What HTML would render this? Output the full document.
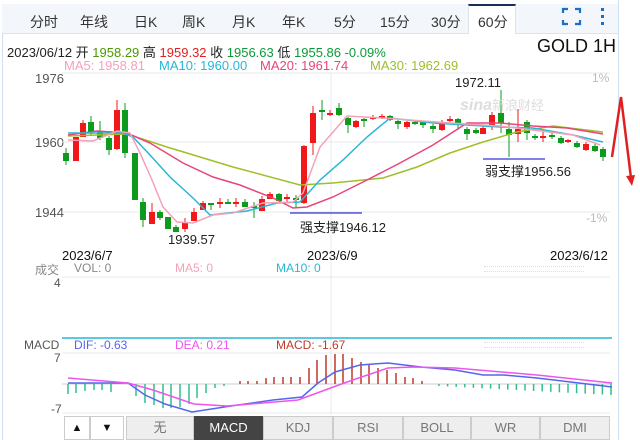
<!DOCTYPE html>
<html><head><meta charset="utf-8"><style>
*{margin:0;padding:0;box-sizing:border-box}
body{width:640px;height:440px;background:#fff;position:relative;overflow:hidden;font-family:"Liberation Sans","Noto Sans CJK SC",sans-serif}
.a{position:absolute;white-space:nowrap}
.tabs{position:absolute;left:2px;top:4px;width:616px;height:30px;background:#f3f6fa;border-bottom:1px solid #dde3ea}
.tab{position:absolute;top:8px;font-size:14px;color:#333}
.act{position:absolute;left:466px;top:0;width:48px;height:30px;background:#fff;border-top:2px solid #1c2d5a;border-left:1px solid #dde3ea;border-right:1px solid #dde3ea}
.btn{position:absolute;top:416px;height:24px;border:1px solid #ccc;background:#eee;font-size:13px;color:#777;text-align:center;line-height:22px}
</style></head><body>
<div class="a" style="left:2px;top:4px;width:1px;height:436px;background:#cfe0f0"></div>
<div class="a" style="left:618px;top:0;width:1px;height:440px;background:#cfe0f0"></div>
<div class="tabs">
<div class="act"></div>
<span class="tab" style="left:28px">分时</span>
<span class="tab" style="left:78px">年线</span>
<span class="tab" style="left:132px">日K</span>
<span class="tab" style="left:180px">周K</span>
<span class="tab" style="left:230px">月K</span>
<span class="tab" style="left:280px">年K</span>
<span class="tab" style="left:332px">5分</span>
<span class="tab" style="left:378px">15分</span>
<span class="tab" style="left:429px">30分</span>
<span class="tab" style="left:476px">60分</span>
<svg class="a" style="left:558px;top:3px" width="60" height="20"><g stroke="#1a6fc9" stroke-width="2.2" fill="none"><path d="M3 6V2h5M15 2h5v4M20 13v4h-5M8 17H3v-4"/></g><g fill="#1a6fc9"><rect x="41" y="1" width="3" height="3"/><rect x="41" y="8" width="3" height="3"/><rect x="41" y="15" width="3" height="3"/></g></svg>
</div>
<div class="a" style="left:7px;top:42px;font-size:13px;color:#222">2023/06/12 开 <span style="color:#4a9a00">1958.29</span> 高 <span style="color:#e02020">1959.32</span> 收 <span style="color:#0a9a3a">1956.63</span> 低 <span style="color:#0a9a3a">1955.86 -0.09%</span></div>
<div class="a" style="left:537px;top:36px;font-size:18px;color:#111">GOLD 1H</div>
<div class="a" style="left:64px;top:58px;font-size:13px;color:#f7a1b8">MA5: 1958.81</div>
<div class="a" style="left:159px;top:58px;font-size:13px;color:#27b7d7">MA10: 1960.00</div>
<div class="a" style="left:260px;top:58px;font-size:13px;color:#e8457a">MA20: 1961.74</div>
<div class="a" style="left:370px;top:58px;font-size:13px;color:#9fbf2a">MA30: 1962.69</div>
<div class="a" style="left:35px;top:71px;font-size:13px;color:#555">1976</div>
<div class="a" style="left:35px;top:135px;font-size:13px;color:#555">1960</div>
<div class="a" style="left:35px;top:205px;font-size:13px;color:#555">1944</div>
<div class="a" style="left:592px;top:71px;font-size:12px;color:#bbb">1%</div>
<div class="a" style="left:586px;top:211px;font-size:12px;color:#bbb">-1%</div>
<svg class="a" style="left:0;top:0" width="640" height="440" id="s">
<g stroke="#e4e8ec" stroke-width="1"><line x1="62" y1="73" x2="610" y2="73"/><line x1="62" y1="142" x2="610" y2="142"/><line x1="62" y1="212" x2="610" y2="212"/><line x1="331" y1="73" x2="331" y2="415"/><line x1="62" y1="277" x2="610" y2="277"/><line x1="62" y1="353" x2="610" y2="353"/><line x1="62" y1="413" x2="610" y2="413"/></g>
<line x1="62" y1="338" x2="612" y2="338" stroke="#27b7d7" stroke-width="1.5"/>
<line x1="62" y1="384" x2="612" y2="384" stroke="#ccc"/>
<g id="c"></g>
<g fill="none" stroke-width="1.5">
<polyline stroke="#9fbf2a" points="68,136 127,134 167,147 233,167 300,185 333,183 383,178 417,167 450,153 483,142 517,132 553,126 603,132"/>
<polyline stroke="#e8457a" points="68,135 97,131 127,133 150,143 183,163 213,177 240,185 273,198 293,208 307,207 333,197 367,180 400,163 433,145 467,123 500,123 533,126 567,128 603,134"/>
<polyline stroke="#27b7d7" points="68,133 123,133 133,137 150,155 170,177 193,198 210,215 247,211 277,203 300,202 320,180 343,160 367,137 390,118 433,123 467,125 500,127 533,128 573,135 603,142"/>
<polyline stroke="#f7a1b8" points="68,140 93,141 117,131 130,133 140,153 152,180 163,207 177,222 193,223 213,215 233,213 263,203 293,202 303,193 320,147 347,116 383,118 450,123 500,126 533,130 573,135 600,145"/>
</g>
<line x1="290" y1="213" x2="362" y2="213" stroke="#0000cc"/>
<line x1="483" y1="159" x2="545" y2="159" stroke="#0000cc"/>
<text x="460" y="110" font-size="16" font-style="italic" font-weight="bold" fill="#ddd" font-family="Liberation Sans,sans-serif">sina</text>
<text x="492" y="110" font-size="13" fill="#ddd" font-family="Noto Sans CJK SC,sans-serif">新浪财经</text>
<polyline points="612,157 621,97 631,178" fill="none" stroke="#e02020" stroke-width="2.5"/>
<path d="M626,176 L632,186 L635,175Z" fill="#e02020"/>
<g id="m"></g>
<polyline fill="none" stroke="#5566ee" stroke-width="1.5" points="68,383 128,383 145,395 165,404 192,412 231,406 273,400 302,397 318,383 335,372 360,365 388,363 421,367 455,370 483,375 504,375 537,378 579,383 612,387"/>
<polyline fill="none" stroke="#ee55ee" stroke-width="1.5" points="68,378 128,383 153,390 194,404 227,406 298,400 347,382 388,368 413,367 455,368 537,375 612,383"/>
</svg>
<div class="a" style="left:168px;top:232px;font-size:13px;color:#222">1939.57</div>
<div class="a" style="left:300px;top:217px;font-size:13px;color:#222">强支撑1946.12</div>
<div class="a" style="left:455px;top:75px;font-size:13px;color:#222">1972.11</div>
<div class="a" style="left:485px;top:161px;font-size:13px;color:#222">弱支撑1956.56</div>
<div class="a" style="left:62px;top:248px;font-size:13px;color:#111">2023/6/7</div>
<div class="a" style="left:307px;top:248px;font-size:13px;color:#111">2023/6/9</div>
<div class="a" style="left:550px;top:248px;font-size:13px;color:#111">2023/6/12</div>
<div class="a" style="left:35px;top:261px;font-size:12px;color:#888">成交</div>
<div class="a" style="left:74px;top:261px;font-size:12px;color:#888">VOL: 0</div>
<div class="a" style="left:175px;top:261px;font-size:12px;color:#f7a1b8">MA5: 0</div>
<div class="a" style="left:276px;top:261px;font-size:12px;color:#27b7d7">MA10: 0</div>
<div class="a" style="left:54px;top:276px;font-size:12px;color:#555">4</div>
<div class="a" style="left:24px;top:338px;font-size:12px;color:#555">MACD</div>
<div class="a" style="left:74px;top:338px;font-size:12px;color:#5566ee">DIF: -0.63</div>
<div class="a" style="left:175px;top:338px;font-size:12px;color:#ee55ee">DEA: 0.21</div>
<div class="a" style="left:276px;top:338px;font-size:12px;color:#c0392b">MACD: -1.67</div>
<div class="a" style="left:54px;top:351px;font-size:12px;color:#555">7</div>
<div class="a" style="left:51px;top:402px;font-size:12px;color:#555">-7</div>
<div class="a" style="left:484px;top:266px;width:100px;height:6px;border-top:1px dotted #ddd;border-bottom:1px dotted #ddd"></div>
<div class="a" style="left:484px;top:342px;width:100px;height:6px;border-top:1px dotted #ddd;border-bottom:1px dotted #ddd"></div>
<div class="btn" style="left:64px;width:26px;background:#fff;color:#111;font-size:11px">▲</div>
<div class="btn" style="left:90px;width:34px;background:#fff;color:#111;font-size:11px">▼</div>
<div class="btn" style="left:126px;width:68px">无</div>
<div class="btn" style="left:194px;width:69px;background:#444;color:#fff;border-color:#444">MACD</div>
<div class="btn" style="left:263px;width:70px">KDJ</div>
<div class="btn" style="left:333px;width:70px">RSI</div>
<div class="btn" style="left:403px;width:68px">BOLL</div>
<div class="btn" style="left:471px;width:69px">WR</div>
<div class="btn" style="left:540px;width:70px">DMI</div>
<script>
var C=[[66,153,161,148,165,0],[76,137,161,137,161,1],[83,123,137,120,137,1],[91,122,132,116,135,0],[100,131,138,121,140,0],[109,138,150,136,155,0],[117,110,149,100,150,1],[125,110,153,103,158,0],[135,153,200,153,200,0],[143,202,220,198,227,0],[152,212,224,203,224,1],[160,212,218,210,220,0],[168,217,229,217,229,0],[176,227,232,225,232,0],[185,222,229,218,232,1],[194,212,221,208,221,1],[203,203,210,201,210,1],[211,203,205,203,210,0],[220,202,204,198,208,1],[228,202,204,199,204,0],[236,202,204,198,207,1],[245,202,207,199,207,0],[254,206,208,202,218,0],[262,199,211,196,211,1],[270,194,199,192,199,1],[279,194,201,193,201,0],[287,197,199,194,202,1],[296,198,200,195,207,0],[304,146,203,145,204,1],[313,113,143,106,155,1],[322,110,112,100,120,0],[330,113,115,110,116,1],[339,108,115,103,116,0],[348,118,125,117,133,0],[356,121,127,120,128,1],[364,119,121,118,127,0],[373,117,119,115,120,1],[382,116,118,114,119,1],[390,116,120,115,121,0],[398,121,124,120,129,0],[407,122,127,121,129,1],[415,122,124,120,125,0],[423,122,125,121,128,0],[433,126,129,124,133,0],[442,123,130,120,131,1],[450,119,121,116,122,1],[458,119,125,118,130,0],[467,129,134,127,140,0],[476,130,133,128,134,0],[483,128,134,126,134,1],[492,115,125,112,130,1],[501,113,123,90,133,0],[509,129,135,122,157,0],[518,129,134,109,142,1],[527,122,133,120,140,0],[535,136,138,134,140,0],[543,136,138,132,142,1],[552,135,137,132,139,0],[561,138,143,136,144,0],[568,140,142,139,143,1],[577,143,147,141,148,0],[586,144,150,142,151,1],[595,146,151,144,152,0],[603,149,157,147,161,0]];
var g=document.getElementById('c'),h='';
C.forEach(function(c){var col=c[5]?'#f01818':'#0d9a1d';var hh=Math.max(c[2]-c[1],1.5);h+='<line x1="'+c[0]+'" x2="'+c[0]+'" y1="'+c[3]+'" y2="'+c[4]+'" stroke="'+col+'"/><rect x="'+(c[0]-3)+'" y="'+c[1]+'" width="6" height="'+hh+'" fill="'+col+'"/>';});
g.innerHTML=h;
var m='';
var neg=[[68,394],[76,393],[85,391],[94,390],[102,390],[111,392],[128,384],[136,396],[145,403],[154,405],[163,408],[171,408],[180,407],[189,404],[197,398],[206,393],[215,388],[224,386]];
var pos=[[240,381],[248,381],[257,381],[266,378],[274,377],[283,377],[291,377],[300,377],[309,368],[317,360],[326,355],[335,354],[343,354],[352,358],[361,362],[369,365],[378,368],[387,370],[396,373],[405,377],[413,378],[422,381]];
neg.forEach(function(p){m+='<line x1="'+p[0]+'" x2="'+p[0]+'" y1="384" y2="'+p[1]+'" stroke="#2fbf8f" stroke-width="1.5"/>';});
pos.forEach(function(p){m+='<line x1="'+p[0]+'" x2="'+p[0]+'" y1="384" y2="'+p[1]+'" stroke="#c0392b" stroke-width="1.5"/>';});
for(var x=439,i=0;x<612;x+=8.6,i++){m+='<line x1="'+x+'" x2="'+x+'" y1="384" y2="'+(386+i*0.45)+'" stroke="#2fbf8f" stroke-width="1.5"/>';}
document.getElementById('m').innerHTML=m;
</script>
</body></html>
